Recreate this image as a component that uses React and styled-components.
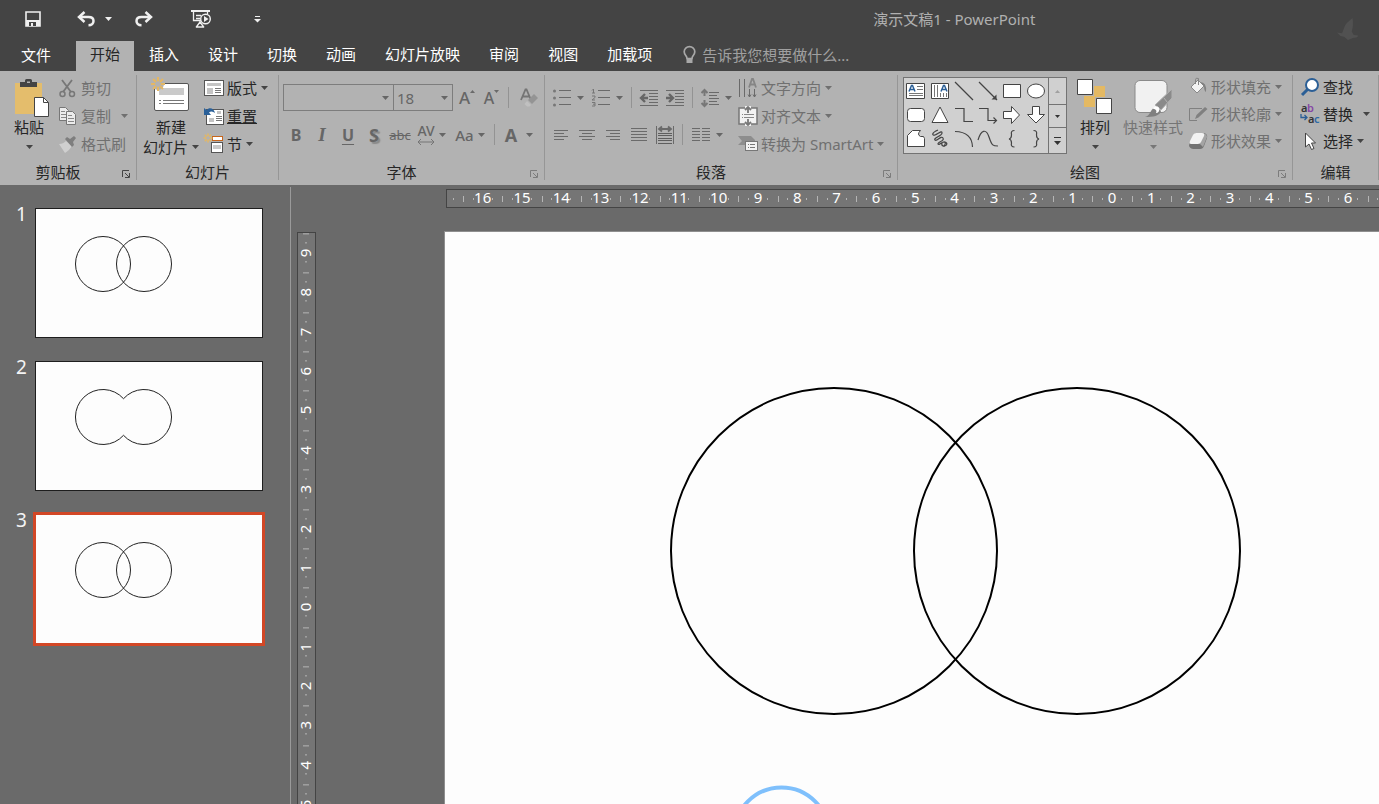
import React, { useState } from "react";
import styled, { createGlobalStyle, css } from "styled-components";

const GlobalStyle = createGlobalStyle`
  * {
    box-sizing: border-box;
  }
  body {
    margin: 0;
    background: #6a6a6a;
  }
  body, button, input, select {
    font-family: "Noto Sans", "Noto Sans CJK SC", sans-serif;
    font-size: 15px;
    line-height: 20px;
  }
  button {
    border: 0;
    padding: 0;
    background: none;
    color: inherit;
    white-space: nowrap;
  }
  svg {
    display: block;
    flex: none;
    overflow: visible;
  }
`;

const Window = styled.div`
  display: flex;
  flex-direction: column;
  height: 100vh;
  overflow: hidden;
  color: #262626;
`;

/* ---------- title bar ---------- */

const TitleBar = styled.header`
  display: grid;
  grid-template-columns: auto 2fr auto 1fr auto;
  align-items: start;
  flex: none;
  height: 41px;
  padding: 0 21px 0 8px;
  background: #444;
  color: #f0f0f0;
`;

const QuickAccess = styled.div`
  display: grid;
  grid-template-columns: 50px 72px 27px 88px 25px;
  height: 38px;
`;

const QuickButton = styled.button`
  display: flex;
  align-items: center;
  justify-content: center;
  gap: 10px;
`;

const DocumentTitle = styled.h1`
  grid-column: 3;
  margin: 0;
  font-size: 15px;
  font-weight: 400;
  line-height: 38px;
  color: #b0b0b0;
`;

const Mascot = styled.div`
  grid-column: 5;
  padding-top: 18px;
`;

/* ---------- tabs ---------- */

const TabBar = styled.nav`
  display: flex;
  gap: 1px;
  flex: none;
  height: 30px;
  background: #444;
  color: #fff;
`;

const Tab = styled.button`
  padding: ${(p) => (p.$file ? "0 24px 2px 21px" : "0 14px 4px")};
  ${(p) =>
    p.$active &&
    css`
      background: #b2b2b2;
      color: #262626;
    `}
`;

const TellMe = styled.label`
  display: flex;
  align-items: center;
  gap: 6px;
  flex: 1;
  padding: 0 0 2px 16px;
`;

const TellMeInput = styled.input`
  flex: 1;
  min-width: 0;
  border: 0;
  padding: 0;
  outline: 0;
  background: none;
  color: #fff;

  &::placeholder {
    color: #a0a0a0;
    opacity: 1;
  }
`;

/* ---------- ribbon ---------- */

const Ribbon = styled.div`
  display: flex;
  flex: none;
  height: 114px;
  background: #b2b2b2;
  overflow: hidden;
`;

const GroupBox = styled.section`
  display: flex;
  flex-direction: column;
  flex: none;
  width: ${(p) => p.$w}px;
  background: linear-gradient(#969696, #969696) right 4px / 1px 105px no-repeat;
`;

const GroupBody = styled.div`
  display: flex;
  height: 91px;
  padding-left: ${(p) => p.$indent}px;
`;

const GroupFooter = styled.div`
  display: flex;
  align-items: center;
  height: 20px;
  padding-right: 1px;
`;

const GroupName = styled.span`
  flex: 1;
  text-align: center;
`;

const Launcher = styled.button`
  width: 20px;
  padding: 4px 6px 0;
  color: ${(p) => (p.$off ? "#7c7c7c" : "#444")};
`;

const LargeButton = styled.button`
  display: flex;
  flex-direction: column;
  align-items: center;
  width: ${(p) => p.$w}px;
  padding-top: 8px;
  color: ${(p) => (p.$off ? "#757575" : "#262626")};
`;

const LargeLine = styled.span`
  display: flex;
  align-items: center;
  justify-content: center;
  gap: 4px;
  height: 20px;
`;

const ButtonStack = styled.div`
  display: flex;
  flex-direction: column;
  padding-top: ${(p) => p.$top || 3}px;
  margin-left: ${(p) => p.$gap || 0}px;
`;

const SmallButton = styled.button`
  display: flex;
  align-items: center;
  gap: 3px;
  height: ${(p) => p.$h || 28}px;
  color: ${(p) => (p.$off ? "#707070" : "#262626")};

  & > svg:last-child:not(:first-child) {
    margin-left: ${(p) => (p.$split ? 7 : 1)}px;
  }
`;

const KeyText = styled.span`
  text-decoration: ${(p) => (p.$underline ? "underline" : "none")};
`;

const ToolRows = styled.div`
  display: flex;
  flex-direction: column;
  width: ${(p) => p.$w || "auto"};
  padding-top: 13px;
  gap: 10px;
`;

const ToolRow = styled.div`
  display: flex;
  align-items: center;
  height: 27px;
`;

const ToolButton = styled.button`
  display: flex;
  align-items: center;
  justify-content: center;
  gap: ${(p) => p.$gap || 6}px;
  width: ${(p) => p.$w || 26}px;
  height: 27px;
  color: #666;
`;

const Divider = styled.span`
  width: 9px;
  height: 21px;
  background: linear-gradient(#939393, #939393) center / 1px 21px no-repeat;
`;

const Glyph = styled.span`
  font-size: ${(p) => p.$size || 16}px;
  font-weight: ${(p) => (p.$bold ? 700 : 500)};
  ${(p) =>
    p.$italic &&
    css`
      font-family: "Liberation Serif", serif;
      font-style: italic;
      font-size: 19px;
    `}
  ${(p) => p.$underline && "text-decoration: underline; text-underline-offset: 3px;"}
  ${(p) => p.$strike && "text-decoration: line-through; font-weight: 400;"}
  ${(p) => p.$shadow && "text-shadow: 2px 2px 1px #8a8a8a;"}
`;

const Combo = styled.label`
  display: grid;
  align-items: center;
  width: ${(p) => p.$w}px;
  height: 27px;
  border: 1px solid #7d7d7d;
  margin-right: -1px;
  color: #6c6c6c;

  & > * {
    grid-area: 1 / 1;
  }
  & > svg {
    justify-self: end;
    margin-right: 4px;
    pointer-events: none;
  }
`;

const ComboSelect = styled.select`
  appearance: none;
  width: 100%;
  height: 25px;
  border: 0;
  padding: 0 3px;
  background: none;
  color: #666;
`;

const FontStep = styled.div`
  display: flex;
  margin-left: 3px;
`;

/* ---------- shape gallery ---------- */

const Gallery = styled.div`
  display: flex;
  height: 77px;
  margin-top: 6px;
  border: 1px solid #737373;
  background: #d0d0d0;
`;

const ShapeGrid = styled.div`
  display: grid;
  grid-template-columns: repeat(6, 24px);
  grid-template-rows: repeat(3, 24px);
  padding-top: 1px;
`;

const ShapeButton = styled.button`
  display: grid;
  place-items: center;
`;

const GalleryScroll = styled.div`
  display: grid;
  grid-template-rows: 26px 23px 1fr;
  width: 18px;
  border-left: 1px solid #737373;
`;

const ScrollButton = styled.button`
  display: grid;
  place-items: center;
  color: ${(p) => (p.$off ? "#a0a0a0" : "#333")};

  & + & {
    border-top: 1px solid #737373;
  }
`;

/* ---------- workspace ---------- */

const Workspace = styled.main`
  display: flex;
  flex: 1;
  min-height: 0;
  padding-top: 2px;
  background: #6a6a6a;
`;

const SlideList = styled.ol`
  display: flex;
  flex-direction: column;
  flex: none;
  gap: 23px;
  width: 290px;
  margin: 0;
  padding: 21px 0 0 16px;
  list-style: none;
`;

const SlideItem = styled.li`
  display: flex;
`;

const SlideNumber = styled.span`
  width: 19px;
  font-size: 19px;
  line-height: 12px;
  color: #f4f4f4;
`;

const Thumbnail = styled.button`
  width: 228px;
  height: 130px;
  border: 1px solid ${(p) => (p.$current ? "#d24726" : "#1e1e1e")};
  outline: ${(p) => (p.$current ? "2px solid #d24726" : "0")};
  background: #fdfdfd;
`;

const Editor = styled.div`
  display: grid;
  grid-template-columns: 19px minmax(0, 1fr);
  grid-template-rows: 19px minmax(0, 1fr);
  gap: 23px 128px;
  flex: 1;
  min-width: 0;
  padding: 2px 0 0 6px;
  border-left: 1px solid #9a9a9a;
`;

const HorizontalRuler = styled.div`
  grid-column: 2;
  margin-left: 2px;
  padding-left: 16px;
  border: 1px solid #444;
  border-right: 0;
  background: linear-gradient(#b5b5b5, #b5b5b5) 6px center / 1px 2px no-repeat, #757575;
  overflow: hidden;
`;

const VerticalRuler = styled.div`
  grid-row: 2;
  margin-top: 1px;
  border: 1px solid #444;
  border-bottom: 0;
  background: #757575;
  overflow: hidden;
`;

const tick = "linear-gradient(#b5b5b5, #b5b5b5)";

const HorizontalScale = styled.div`
  display: grid;
  grid-template-columns: repeat(33, 1fr);
  width: 1298px;
  height: 17px;
`;

const VerticalScale = styled.div`
  display: grid;
  grid-template-rows: repeat(19, 1fr);
  width: 17px;
  height: 748px;
`;

const HorizontalMark = styled.span`
  line-height: 15px;
  text-align: center;
  color: #fff;
  background: ${tick} 0 50% / 1px 6px no-repeat, ${tick} 25% 50% / 1px 2px no-repeat,
    ${tick} 75% 50% / 1px 2px no-repeat;
`;

const VerticalMark = styled.span`
  writing-mode: vertical-rl;
  transform: rotate(180deg);
  line-height: 14px;
  text-align: center;
  color: #fff;
  background: ${tick} 50% 100% / 6px 1px no-repeat, ${tick} 50% 25% / 2px 1px no-repeat,
    ${tick} 50% 75% / 2px 1px no-repeat;
`;

const SlideView = styled.div`
  grid-column: 2;
  border: 1px solid #8f8f8f;
  border-width: 1px 0 0 1px;
  background: #fdfdfd;
  overflow: hidden;
`;

/* ---------- icons ---------- */

const Icon = ({ w = 20, h = 20, box, children }) => (
  <svg width={w} height={h} viewBox={box || `0 0 ${w} ${h}`} fill="none" aria-hidden="true">
    {children}
  </svg>
);

const Caret = ({ color = "#444" }) => (
  <Icon w={7} h={4}>
    <path d="M0 0h7L3.5 4z" fill={color} />
  </Icon>
);

const GREY = "#6a6a6a";

const Lines = ({ rows, color = GREY, width = 1 }) => (
  <path d={rows.map(([x, y, len]) => `M${x} ${y + 0.5}h${len}`).join("")} stroke={color} strokeWidth={width} />
);

const Burst = ({ x, y, r, width = 2 }) => (
  <g transform={`translate(${x} ${y})`} stroke="#e4b763" strokeWidth={width}>
    {[0, 45, 90, 135, 180, 225, 270, 315].map((a) => (
      <path key={a} d={`M0 ${-r * 0.4}V${-r}`} transform={`rotate(${a})`} />
    ))}
  </g>
);

const SaveIcon = () => (
  <Icon w={16} h={16}>
    <path d="M1 1h14v14H1z" stroke="#f0f0f0" strokeWidth="1.600" />
    <path d="M1 9h14v6H1z" fill="#f0f0f0" />
    <path d="M4 11h7v4H4z" fill="#444" />
    <path d="M6 12h2v3H6z" fill="#f0f0f0" />
  </Icon>
);

const UndoIcon = ({ flip }) => (
  <Icon w={18} h={16}>
    <g transform={flip ? "matrix(-1 0 0 1 18 0)" : undefined} stroke="#f0f0f0">
      <path d="M3 6h8.500c3.200 0 5 1.600 5 4s-1.800 4.200-5 4.200" strokeWidth="2.500" />
      <path d="M7.500 1L2 6l5.500 5" strokeWidth="2.500" />
    </g>
  </Icon>
);

const ShowIcon = () => (
  <Icon w={20} h={18}>
    <path d="M0 1h19" stroke="#f0f0f0" strokeWidth="2" />
    <path d="M2.500 2v8.500H10M16.500 2v2M5 5.500h5M5 8.500h4M9 11v2M9 12l-4 5.500M9 12l4 5.500M5 17h8" stroke="#f0f0f0" strokeWidth="1.300" />
    <circle cx="14.500" cy="9" r="4.800" fill="#444" stroke="#f0f0f0" strokeWidth="1.400" />
    <path d="M13 6l4.500 3-4.500 3z" fill="#f0f0f0" />
  </Icon>
);

const CustomizeIcon = () => (
  <Icon w={7} h={7}>
    <path d="M1 .5h5" stroke="#f0f0f0" />
    <path d="M0 3h7L3.500 6.500z" fill="#f0f0f0" />
  </Icon>
);

const BirdIcon = () => (
  <Icon w={21} h={22}>
    <path d="M15.500 0c.8 4 .7 9-.8 13.500l2 3.500 4.300.5c.2 1.500-1.500 2.500-4.500 2.200L11 22l-4-3.200L3.500 18 0 14.500l5 .8C7 12 7 7 11 4z" fill="#515151" />
  </Icon>
);

const BulbIcon = () => (
  <Icon w={13} h={18}>
    <path d="M4 12.500C4 10 1.200 9 1.200 5.800a5.200 5 0 0 1 10.600 0C11.800 9 9 10 9 12.500z" stroke="#a8a8a8" strokeWidth="1.700" />
    <path d="M3.500 12.500h6v4.500h-6z" fill="#a8a8a8" />
  </Icon>
);

const LaunchIcon = () => (
  <Icon w={8} h={8}>
    <path d="M.5 7V.5H7M3 3l4 4M7.500 3v4.500H3" stroke="currentColor" />
  </Icon>
);

const PasteIcon = () => (
  <Icon w={40} h={38} box="-6 0 40 38">
    <path d="M0 4h27v31H0z" fill="#e4bd6c" />
    <path d="M5 3h5V1.500Q10 0 11.500 0h4Q17 0 17 1.500V3h5v5H5z" fill="#444" />
    <path d="M12 2.500h3V4h-3z" fill="#b2b2b2" />
    <path d="M19.500 18.500h9l5 5v14h-14z" fill="#fff" stroke="#444" />
    <path d="M28.500 18.500v5h5" stroke="#444" />
  </Icon>
);

const CutIcon = () => (
  <Icon>
    <path d="M4 2l9 12M14 2L5 14" stroke="#777" strokeWidth="1.800" />
    <circle cx="4.500" cy="16" r="2.500" stroke="#777" strokeWidth="1.500" />
    <circle cx="14" cy="16" r="2.500" stroke="#777" strokeWidth="1.500" />
  </Icon>
);

const CopyIcon = () => (
  <Icon>
    <path d="M1.500 1.500h6l3 3v10h-9z" fill="#ececec" stroke="#777" />
    <Lines rows={[[3, 5, 4], [3, 8, 5], [3, 11, 5]]} color="#888" />
    <path d="M8.500 5.500h6l3 3v10h-9z" fill="#ececec" stroke="#777" />
    <Lines rows={[[10, 9, 4], [10, 12, 6], [10, 15, 6]]} color="#888" />
  </Icon>
);

const PainterIcon = () => (
  <Icon>
    <path d="M1 10c3 0 5-1 7-3l6 5c-2 3-4 5-7 7z" fill="#cfcfcf" />
    <path d="M7 5l2-2 3 2 4-3 2 2-3 4 1 3-2 2z" fill="#7e7e7e" />
  </Icon>
);

const NewSlideIcon = () => (
  <Icon w={40} h={38}>
    <rect x="3.500" y="4.500" width="34" height="27" rx="1.500" fill="#fff" stroke="#555" />
    <path d="M8 9h25v7H8z" fill="#cacaca" />
    <Lines rows={[[8, 21, 2], [12, 21, 21], [8, 24, 2], [12, 24, 21]]} color="#777" />
    <circle cx="7" cy="5" r="6" fill="#b2b2b2" />
    <Burst x={7} y={5} r={7} />
  </Icon>
);

const LayoutIcon = () => (
  <Icon>
    <rect x=".5" y="2.500" width="19" height="15" fill="#fff" stroke="#555" />
    <path d="M3 5h14v3H3zM3 10h6v6H3z" fill="#c4c4c4" />
    <Lines rows={[[11, 10, 6], [11, 12, 6], [11, 14, 6]]} color="#777" />
  </Icon>
);

const ResetIcon = () => (
  <Icon>
    <rect x="2.500" y="3.500" width="17" height="15" fill="#fff" stroke="#555" />
    <path d="M5 12h5v4H5zM13 5h4v3h-4z" fill="#c4c4c4" />
    <Lines rows={[[12, 10, 6], [12, 12, 6], [12, 14, 6]]} color="#777" />
    <path d="M0 2v7h7L5 6.500c2-1.500 4-1 6 .5C10 3 6 .5 2.500 4z" fill="#2a6099" />
  </Icon>
);

const SectionIcon = () => (
  <Icon>
    <rect x="8.500" y="2.500" width="10" height="4" fill="#fff" stroke="#c8651b" />
    <rect x="7.500" y="8.500" width="11" height="10" fill="#fff" stroke="#555" />
    <path d="M9 11h8v4H9z" fill="#c9c9c9" />
    <Burst x={4} y={4} r={4.500} width={1.500} />
  </Icon>
);

const EraserIcon = () => (
  <Icon w={18} h={20}>
    <path d="M1 12L5.500 1.500h1L11 12M3 8.500h6" stroke="#757575" strokeWidth="1.800" />
    <path d="M8 12l6-6 4 4-6 6z" fill="#949494" />
    <path d="M7 13l4 4-1.500 1.500H7L4.500 16z" fill="#c0c0c0" />
  </Icon>
);

const Direction = ({ up }) => (
  <Icon w={5} h={16}>
    <path d={up ? "M-1 3L1.500 0 4 3z" : "M-1 0h5L1.500 3z"} fill={GREY} />
  </Icon>
);

const SpacingIcon = () => (
  <Icon w={18} h={8}>
    <path d="M1 4h16M4 1L1 4l3 3M14 1l3 3-3 3" stroke="#757575" />
  </Icon>
);

const SpacingLabel = styled.span`
  display: grid;
  justify-items: center;
  line-height: 14px;
`;

const BulletsIcon = () => (
  <Icon w={18} h={18}>
    {[2, 9, 16].map((y) => (
      <circle key={y} cx="1.500" cy={y} r="1.500" fill="#777" />
    ))}
    <Lines rows={[[6, 1, 12], [6, 8, 12], [6, 15, 12]]} />
  </Icon>
);

const NumbersIcon = () => (
  <Icon w={18} h={18}>
    <Lines rows={[[6, 1, 12], [6, 8, 12], [6, 15, 12]]} />
    <path d="M0 1.500L1.500 0v4M0 4h3M0 7h3v1.500L0 11h3M0 13.500h3V17H0M1 15.200h2" stroke="#777" />
  </Icon>
);

const IndentIcon = ({ out }) => (
  <Icon w={18} h={18}>
    <Lines rows={[[0, 1, 18], [9, 4, 9], [9, 7, 9], [9, 10, 9], [9, 13, 9], [0, 16, 18]]} />
    <path
      d={out ? "M8 9H1.500M5 5L1 9l4 4" : "M0 9h6.500M3 5l4 4-4 4"}
      stroke="#666"
      strokeWidth="2.400"
    />
  </Icon>
);

const LineSpacingIcon = () => (
  <Icon w={18} h={18}>
    <path d="M3.500 1v6M.5 4l3-3 3 3M3.500 11v6M.5 14l3 3 3-3" stroke="#777" strokeWidth="2" />
    <Lines rows={[[8, 3, 10], [8, 6, 8], [8, 9, 10], [8, 12, 8], [8, 15, 10]]} />
  </Icon>
);

const AlignIcon = ({ rows, w = 14 }) => (
  <Icon w={w} h={rows.length * 3 - 2}>
    <Lines rows={rows.map(([x, len], i) => [x, i * 3, len])} />
  </Icon>
);

const DistributeIcon = () => (
  <Icon w={18} h={18}>
    <path d="M.5 0v18M17.500 0v18" stroke={GREY} />
    <path d="M3 3h12M6 .5L3 3l3 2.500M12 .5L15 3l-3 2.500" stroke={GREY} strokeWidth="1.800" />
    <Lines rows={[[2, 7, 14], [2, 9, 14], [2, 12, 14], [2, 14, 14], [2, 17, 14]]} color="#5e5e5e" />
  </Icon>
);

const ColumnsIcon = () => (
  <Icon w={18} h={13}>
    <Lines rows={[0, 3, 6, 9, 12].flatMap((y) => [[0, y, 8], [10, y, 8]])} />
  </Icon>
);

const TextDirectionIcon = () => (
  <Icon>
    <path d="M1.500 1v18M6.500 1v18M11.500 11v8M16.500 11v8" stroke={GREY} />
    <path d="M10 16.500l1.500 2.500 1.500-2.500M15 16.500l1.500 2.500 1.500-2.500" stroke={GREY} />
    <path d="M11 9.500L14 1h1l3 8.500M12.200 6.500h4.600" stroke="#858585" strokeWidth="1.800" />
  </Icon>
);

const AlignTextIcon = () => (
  <Icon>
    <path d="M1 2h18v16H1z" fill="#f2f2f2" stroke="#777" strokeWidth="1.500" />
    <path d="M7 0h6v7H7zM7 13h6v7H7z" fill="#f2f2f2" />
    <Lines rows={[[4, 8, 1], [6, 8, 10], [4, 11, 1], [6, 11, 10]]} color="#888" />
    <path d="M10 7V1.500M7 4l3-3 3 3M10 13v5.500M7 16l3 3 3-3" stroke="#777" strokeWidth="1.800" />
  </Icon>
);

const SmartArtIcon = () => (
  <Icon>
    <path d="M0 2h13l4 4v1H8v4H0l4-4z" fill="#8d8d8d" />
    <rect x="7.500" y="7.500" width="12" height="9" fill="#f2f2f2" stroke="#777" />
    <Lines rows={[[10, 10, 1], [12, 10, 5], [10, 13, 1], [12, 13, 5]]} color="#777" />
  </Icon>
);

const ArrangeIcon = () => (
  <Icon w={36} h={38}>
    <path d="M17 7h11v11H17zM7 17h11v11H7z" fill="#e4b963" />
    <path d="M.5 .5h15v15H.5zM19.500 19.500h15v15h-15z" fill="#fff" stroke="#444" />
  </Icon>
);

const QuickStyleIcon = () => (
  <Icon w={38} h={38}>
    <rect x="1" y="1.500" width="32" height="32" rx="5" fill="#f1f1f1" stroke="#8a8a8a" />
    <path d="M38 10v9L27 31l-6-5z" fill="#8a8a8a" stroke="#b2b2b2" />
    <path d="M30 19l3.500 4.500" stroke="#b2b2b2" />
    <path d="M11 38c6-1 5-10 12-10l4 4c-1 5-8 6-16 6z" fill="#808080" />
    <path d="M19 30c1-3 5-3 6-1 1 3-1 5-3 5 1-2 0-4-3-4z" fill="#fff" />
  </Icon>
);

const FillIcon = () => (
  <Icon>
    <path d="M3 10l7-7 6 6-7 7z" fill="#f2f2f2" stroke="#888" />
    <path d="M7.500 7V2.500q0-2 3-1V8" stroke="#858585" />
    <path d="M12 5q7 0 6 10-2-1-2-6z" fill="#808080" />
  </Icon>
);

const OutlineIcon = () => (
  <Icon>
    <path d="M14 4.500H1.500v12H9" stroke="#808080" />
    <path d="M7 15l1.500-4L17 3l2.500 2-9 8.500z" fill="#808080" />
  </Icon>
);

const EffectIcon = () => (
  <Icon>
    <path d="M7 2h9q4 1 3 5l-3 8q-1 3-4 3H5q-4-1-4-4z" fill="#737373" />
    <path d="M15 2q4 1 4 4l-4 10-4-4z" fill="#a4a4a4" />
    <path d="M5 4q1-2 3-2h6q3 0 2 3l-3 6q-1 2-3 2H3q-2 0-1-3z" fill="#f2f2f2" />
  </Icon>
);

const FindIcon = () => (
  <Icon>
    <path d="M8 12l-6 6" stroke="#2b5f96" strokeWidth="3" />
    <circle cx="12" cy="8" r="6" fill="#fff" stroke="#2b5f96" strokeWidth="2" />
  </Icon>
);

const ReplaceIcon = () => (
  <Icon>
    <g fontFamily="Noto Sans" fontWeight="600" fontSize="11">
      <text x="1" y="8" fill="#333">a</text>
      <text x="7" y="8" fill="#8547a5">b</text>
      <text x="8" y="19" fill="#333">a</text>
      <text x="14" y="19" fill="#2f6ba5">c</text>
    </g>
    <path d="M1 10v3.500h6M4.500 11L7 13.500 4.500 16" stroke="#2b5f96" strokeWidth="1.300" />
  </Icon>
);

const SelectIcon = () => (
  <Icon>
    <path d="M5.500 2v14l3.500-3 2.500 5.500 2.500-1-2.500-5.500H15.500z" fill="#fff" stroke="#444" />
  </Icon>
);

const LINE = { stroke: "#444", strokeWidth: 1.2 };
const SOLID = { stroke: "#444", fill: "#fff" };

const SHAPES = [
  ["文本框", <><path d="M.5 2.500h18v15H.5z" {...SOLID} /><path d="M3 10.500l2.500-6h1l2.500 6M4 8.500h4" stroke="#2b5f96" strokeWidth="1.500" /><Lines rows={[[11, 5, 6], [11, 8, 6], [3, 12, 14], [3, 14, 14]]} color="#777" /></>],
  ["竖排文本框", <><path d="M1.500 2.500h17v15h-17z" {...SOLID} /><path d="M11 10.500l2.500-6h1l2.500 6M12 8.500h4" stroke="#2b5f96" strokeWidth="1.500" /><path d="M4.500 4v12M7.500 4v12M10.500 12v4M13.500 12v4M16.500 12v4" stroke="#777" /></>],
  ["直线", <path d="M1 1l18 18" {...LINE} />],
  ["箭头", <><path d="M1 1l18 18" {...LINE} /><path d="M18.500 13.500v5h-5z" fill="#444" /></>],
  ["矩形", <path d="M1.500 3.500h17v13h-17z" {...SOLID} />],
  ["椭圆", <ellipse cx="10" cy="10" rx="8.500" ry="7" {...SOLID} />],
  ["圆角矩形", <rect x="1.500" y="3.500" width="17" height="13" rx="3" {...SOLID} />],
  ["三角形", <path d="M10 2l8 15.500H2z" {...SOLID} />],
  ["肘形连接符", <path d="M1 3.500h9v13h9" {...LINE} />],
  ["肘形箭头", <path d="M1 3.500h9v12h8M15.500 12.500l3 3-3 3" {...LINE} />],
  ["右箭头", <path d="M1.500 6.500h8v-5l8 8.500-8 8.500v-5h-8z" {...SOLID} />],
  ["下箭头", <path d="M6.500 1.500h7v8h5L10 18 1.500 9.500h5z" {...SOLID} />],
  ["任意多边形", <path d="M1.500 6.500l5-5h8q-4 4 0 6 4-1 4 2v8h-17z" {...SOLID} />],
  ["自由曲线", <path d="M8 1C1 4 2 7 5 6s7-5 7-2-9 5-7 7 6-5 8-2-6 4-5 6 4-3 7-2 2 4-1 4-3-4 0-4 0 4 0 5" {...LINE} />],
  ["弧形", <path d="M1 2.500Q18 3 18.500 18" {...LINE} />],
  ["曲线", <path d="M0 11C3 1 8-1 11 8s4 9 9 9" {...LINE} />],
  ["左大括号", <path d="M12.500 1.500q-4 0-3 4 0 4-2.500 4.500 2.500.5 2.500 4-1 4 3 4" {...LINE} />],
  ["右大括号", <path d="M7.500 1.500q4 0 3 4 0 4 2.500 4.500-2.500.5-2.500 4 1 4-3 4" {...LINE} />],
];

/* ---------- ribbon pieces ---------- */

const Group = ({ name, w, indent = 0, launcher, off, children }) => (
  <GroupBox $w={w} aria-label={name}>
    <GroupBody $indent={indent}>{children}</GroupBody>
    <GroupFooter>
      <GroupName>{name}</GroupName>
      {launcher && (
        <Launcher $off={off} aria-label={`${name}设置`}>
          <LaunchIcon />
        </Launcher>
      )}
    </GroupFooter>
  </GroupBox>
);

const Small = ({ icon, text, menu, off, split, h, underline }) => (
  <SmallButton $off={off} $split={split} $h={h}>
    {icon}
    <KeyText $underline={underline}>{text}</KeyText>
    {menu && <Caret color={off ? "#707070" : "#444"} />}
  </SmallButton>
);

const Tool = ({ label, w, gap, menu, children }) => (
  <ToolButton $w={w} $gap={gap} aria-label={label}>
    {children}
    {menu && <Caret color="#666" />}
  </ToolButton>
);

const ClipboardGroup = () => (
  <Group name="剪贴板" w={137} launcher>
    <LargeButton $w={58}>
      <PasteIcon />
      <LargeLine>粘贴</LargeLine>
      <LargeLine>
        <Caret />
      </LargeLine>
    </LargeButton>
    <ButtonStack>
      <Small icon={<CutIcon />} text="剪切" off />
      <Small icon={<CopyIcon />} text="复制" off menu split />
      <Small icon={<PainterIcon />} text="格式刷" off />
    </ButtonStack>
  </Group>
);

const SlidesGroup = () => (
  <Group name="幻灯片" w={142} indent={4}>
    <LargeButton $w={60}>
      <NewSlideIcon />
      <LargeLine>新建</LargeLine>
      <LargeLine>
        幻灯片
        <Caret />
      </LargeLine>
    </LargeButton>
    <ButtonStack $gap={3}>
      <Small icon={<LayoutIcon />} text="版式" menu />
      <Small icon={<ResetIcon />} text="重置" underline />
      <Small icon={<SectionIcon />} text="节" menu />
    </ButtonStack>
  </Group>
);

const FontGroup = () => (
  <Group name="字体" w={266} indent={4} launcher off>
    <ToolRows>
      <ToolRow>
        <Combo $w={111}>
          <ComboSelect aria-label="字体" defaultValue="">
            <option value=""></option>
          </ComboSelect>
          <Caret color="#666" />
        </Combo>
        <Combo $w={60}>
          <ComboSelect aria-label="字号" defaultValue="18">
            <option>18</option>
          </ComboSelect>
          <Caret color="#666" />
        </Combo>
        <FontStep>
          <Tool label="增大字号" w={25} gap={1}>
            <Glyph $size={17}>A</Glyph>
            <Direction up />
          </Tool>
          <Tool label="减小字号" w={24} gap={1}>
            <Glyph $size={16}>A</Glyph>
            <Direction />
          </Tool>
        </FontStep>
        <Divider />
        <Tool label="清除格式" w={31}>
          <EraserIcon />
        </Tool>
      </ToolRow>
      <ToolRow>
        <Tool label="加粗">
          <Glyph $bold>B</Glyph>
        </Tool>
        <Tool label="倾斜">
          <Glyph $bold $italic>I</Glyph>
        </Tool>
        <Tool label="下划线">
          <Glyph $bold $underline>U</Glyph>
        </Tool>
        <Tool label="文字阴影">
          <Glyph $size={18} $bold $shadow>S</Glyph>
        </Tool>
        <Tool label="删除线">
          <Glyph $size={13} $strike>abc</Glyph>
        </Tool>
        <Tool label="字符间距" w={37} gap={4} menu>
          <SpacingLabel>
            <Glyph $size={14}>AV</Glyph>
            <SpacingIcon />
          </SpacingLabel>
        </Tool>
        <Tool label="更改大小写" w={40} gap={4} menu>
          <Glyph $size={15}>Aa</Glyph>
        </Tool>
        <Divider />
        <Tool label="字体颜色" w={40} gap={9} menu>
          <Glyph $size={18} $bold>A</Glyph>
        </Tool>
      </ToolRow>
    </ToolRows>
  </Group>
);

const ParagraphGroup = () => (
  <Group name="段落" w={353} indent={3} launcher off>
    <ToolRows $w="187px">
      <ToolRow>
        <Tool label="项目符号" w={40} menu>
          <BulletsIcon />
        </Tool>
        <Tool label="编号" w={39} menu>
          <NumbersIcon />
        </Tool>
        <Divider />
        <Tool label="降低列表级别">
          <IndentIcon out />
        </Tool>
        <Tool label="提高列表级别">
          <IndentIcon />
        </Tool>
        <Divider />
        <Tool label="行距" w={38} menu>
          <LineSpacingIcon />
        </Tool>
      </ToolRow>
      <ToolRow>
        <Tool label="左对齐">
          <AlignIcon rows={[[0, 14], [0, 10], [0, 14], [0, 10]]} />
        </Tool>
        <Tool label="居中">
          <AlignIcon w={16} rows={[[0, 16], [3, 10], [0, 16], [3, 10]]} />
        </Tool>
        <Tool label="右对齐">
          <AlignIcon rows={[[0, 14], [4, 10], [0, 14], [4, 10]]} />
        </Tool>
        <Tool label="两端对齐">
          <AlignIcon w={16} rows={[[0, 16], [0, 16], [0, 16], [0, 16], [0, 16]]} />
        </Tool>
        <Tool label="分散对齐">
          <DistributeIcon />
        </Tool>
        <Divider />
        <Tool label="分栏" w={40} menu>
          <ColumnsIcon />
        </Tool>
      </ToolRow>
    </ToolRows>
    <ButtonStack $gap={3}>
      <Small icon={<TextDirectionIcon />} text="文字方向" off menu />
      <Small icon={<AlignTextIcon />} text="对齐文本" off menu />
      <Small icon={<SmartArtIcon />} text="转换为 SmartArt" off menu />
    </ButtonStack>
  </Group>
);

const DrawingGroup = () => (
  <Group name="绘图" w={395} indent={5} launcher off>
    <Gallery>
      <ShapeGrid>
        {SHAPES.map(([name, drawing]) => (
          <ShapeButton key={name} aria-label={name}>
            <Icon>{drawing}</Icon>
          </ShapeButton>
        ))}
      </ShapeGrid>
      <GalleryScroll>
        <ScrollButton $off aria-label="上一行">
          <Icon w={5} h={3}>
            <path d="M0 3h5L2.500 0z" fill="currentColor" />
          </Icon>
        </ScrollButton>
        <ScrollButton aria-label="下一行">
          <Icon w={5} h={3}>
            <path d="M0 0h5L2.500 3z" fill="currentColor" />
          </Icon>
        </ScrollButton>
        <ScrollButton aria-label="其他形状">
          <Icon w={7} h={8}>
            <path d="M0 0h7v1H0zM0 4h7L3.500 8z" fill="currentColor" />
          </Icon>
        </ScrollButton>
      </GalleryScroll>
    </Gallery>
    <LargeButton $w={56}>
      <ArrangeIcon />
      <LargeLine>排列</LargeLine>
      <LargeLine>
        <Caret />
      </LargeLine>
    </LargeButton>
    <LargeButton $w={60} $off>
      <QuickStyleIcon />
      <LargeLine>快速样式</LargeLine>
      <LargeLine>
        <Caret color="#777" />
      </LargeLine>
    </LargeButton>
    <ButtonStack $gap={5} $top={2}>
      <Small h={27} icon={<FillIcon />} text="形状填充" off menu />
      <Small h={27} icon={<OutlineIcon />} text="形状轮廓" off menu />
      <Small h={27} icon={<EffectIcon />} text="形状效果" off menu />
    </ButtonStack>
  </Group>
);

const EditingGroup = () => (
  <Group name="编辑" w={86} indent={7}>
    <ButtonStack $top={2}>
      <Small h={27} icon={<FindIcon />} text="查找" />
      <Small h={27} icon={<ReplaceIcon />} text="替换" menu split />
      <Small h={27} icon={<SelectIcon />} text="选择" menu />
    </ButtonStack>
  </Group>
);

/* ---------- slides ---------- */

const Overlap = () => (
  <g stroke="#222">
    <circle cx="67" cy="55" r="27.500" />
    <circle cx="108" cy="55" r="27.500" />
  </g>
);

const Union = () => (
  <path
    d="M87.500 36.700A27.500 27.500 0 1 0 87.500 73.300A27.500 27.500 0 1 0 87.500 36.700z"
    stroke="#222"
  />
);

const SLIDES = [Overlap, Union, Overlap];

const TABS = ["开始", "插入", "设计", "切换", "动画", "幻灯片放映", "审阅", "视图", "加载项"];

const across = Array.from({ length: 33 }, (_, i) => Math.abs(i - 16));
const down = Array.from({ length: 19 }, (_, i) => Math.abs(i - 9));

const App = () => {
  const [tab, setTab] = useState("开始");
  const [current, setCurrent] = useState(2);

  return (
    <Window>
      <GlobalStyle />
      <TitleBar>
        <QuickAccess>
          <QuickButton aria-label="保存">
            <SaveIcon />
          </QuickButton>
          <QuickButton aria-label="撤消">
            <UndoIcon />
            <Caret color="#f0f0f0" />
          </QuickButton>
          <QuickButton aria-label="恢复">
            <UndoIcon flip />
          </QuickButton>
          <QuickButton aria-label="从头开始放映">
            <ShowIcon />
          </QuickButton>
          <QuickButton aria-label="自定义快速访问工具栏">
            <CustomizeIcon />
          </QuickButton>
        </QuickAccess>
        <DocumentTitle>演示文稿1 - PowerPoint</DocumentTitle>
        <Mascot>
          <BirdIcon />
        </Mascot>
      </TitleBar>
      <TabBar>
        <Tab $file>文件</Tab>
        {TABS.map((name) => (
          <Tab key={name} $active={name === tab} onClick={() => setTab(name)}>
            {name}
          </Tab>
        ))}
        <TellMe>
          <BulbIcon />
          <TellMeInput aria-label="操作说明搜索" placeholder="告诉我您想要做什么..." />
        </TellMe>
      </TabBar>
      <Ribbon>
        <ClipboardGroup />
        <SlidesGroup />
        <FontGroup />
        <ParagraphGroup />
        <DrawingGroup />
        <EditingGroup />
      </Ribbon>
      <Workspace>
        <SlideList>
          {SLIDES.map((Drawing, i) => (
            <SlideItem key={i}>
              <SlideNumber>{i + 1}</SlideNumber>
              <Thumbnail
                $current={i === current}
                aria-label={`幻灯片 ${i + 1}`}
                onClick={() => setCurrent(i)}
              >
                <Icon w={226} h={128}>
                  <Drawing />
                </Icon>
              </Thumbnail>
            </SlideItem>
          ))}
        </SlideList>
        <Editor>
          <HorizontalRuler>
            <HorizontalScale>
              {across.map((n, i) => (
                <HorizontalMark key={i}>{n}</HorizontalMark>
              ))}
            </HorizontalScale>
          </HorizontalRuler>
          <VerticalRuler>
            <VerticalScale>
              {down.map((n, i) => (
                <VerticalMark key={i}>{n}</VerticalMark>
              ))}
            </VerticalScale>
          </VerticalRuler>
          <SlideView>
            <Icon w={1333} h={750}>
              <g stroke="#000" strokeWidth="2">
                <circle cx="389" cy="319" r="163" />
                <circle cx="632" cy="319" r="163" />
              </g>
              <circle cx="336.500" cy="603" r="47.500" stroke="#7fc0fc" strokeWidth="4" />
            </Icon>
          </SlideView>
        </Editor>
      </Workspace>
    </Window>
  );
};

export default App;
